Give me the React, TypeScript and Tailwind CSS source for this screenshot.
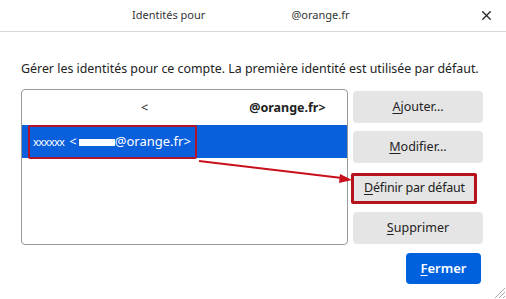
import { X } from "lucide-react"

function Btn({ k, rest, className = "" }: { k: string; rest: string; className?: string }) {
  return (
    <button className={`h-[32px] w-[130px] rounded-[4px] bg-[#e5e5e5] text-[12.5px] text-[#222] ${className}`}>
      <span className="underline underline-offset-2">{k}</span>
      {rest}
    </button>
  )
}

export default function App() {
  return (
    <div
      className="relative h-[299px] w-[506px] overflow-hidden bg-white text-[#222]"
      style={{ fontFamily: '"Noto Sans", "Open Sans", sans-serif' }}
    >
      {/* Title bar */}
      <div className="flex h-[32px] items-center border-b border-[#d9d9d9] pl-[132px] pr-[12px] text-[11px] text-[#333]">
        <span>Identités pour</span>
        <span className="ml-[86px]">@orange.fr</span>
        <X className="ml-auto h-[15px] w-[15px] text-[#222]" strokeWidth={2} />
      </div>

      {/* Body */}
      <div className="px-[21px] pt-[29px]">
        <p className="text-[12.4px] leading-[16px] text-[#222]">
          Gérer les identités pour ce compte. La première identité est utilisée par défaut.
        </p>

        <div className="mt-[12px] flex gap-[5px]">
          {/* List */}
          <div className="h-[156px] w-[327px] rounded-[4px] border border-[#999] pt-[2px]">
            <div className="flex h-[33px] items-center text-[12.5px]">
              <span className="ml-[119px]">&lt;</span>
              <span className="ml-[101px] font-bold">@orange.fr&gt;</span>
            </div>
            <div className="flex h-[33px] items-center bg-[#0a60dc] text-[13px] text-white">
              <span className="ml-[6px] flex h-[34px] items-center rounded-[2px] border-2 border-[#b3122a] pl-[3px] pr-[4px] pt-[1px]">
                <span className="text-[11px] tracking-[-0.6px]">xxxxxx</span>
                <span className="ml-[5px]">&lt;</span>
                <span className="ml-[2px] h-[7px] w-[36px] bg-white" />
                <span>@orange.fr&gt;</span>
              </span>
            </div>
          </div>

          {/* Buttons */}
          <div className="flex flex-col gap-[8px] pt-[2px]">
            <Btn k="A" rest="jouter…" />
            <Btn k="M" rest="odifier…" />
            <button className="-ml-[2px] mt-[2px] h-[31px] w-[126px] whitespace-nowrap rounded-[2px] border-[3px] border-[#b5121b] bg-[#e5e5e5] pl-[10px] text-left text-[12.5px] tracking-[-0.2px] text-[#222]">
              <span className="underline underline-offset-2">D</span>éfinir par défaut
            </button>
            <Btn k="S" rest="upprimer" />
          </div>
        </div>

        <div className="mt-[8px] flex justify-end pr-[4px]">
          <button className="h-[31px] w-[75px] rounded-[4px] bg-[#0061df] text-[13px] font-semibold text-white">
            <span className="underline underline-offset-2">F</span>ermer
          </button>
        </div>
      </div>

      {/* Red arrow annotation */}
      <svg className="pointer-events-none absolute left-0 top-0" width="506" height="299">
        <line x1="199" y1="161" x2="342" y2="178" stroke="#c8101c" strokeWidth="2" />
        <polygon points="352,180 340,174 339,183" fill="#c8101c" />
      </svg>

      {/* Resize grip */}
      <svg className="absolute bottom-0 right-0" width="16" height="16">
        <line x1="15" y1="5" x2="5" y2="15" stroke="#aaa" strokeWidth="1" />
        <line x1="15" y1="9" x2="9" y2="15" stroke="#aaa" strokeWidth="1" />
        <line x1="15" y1="13" x2="13" y2="15" stroke="#aaa" strokeWidth="1" />
      </svg>
    </div>
  )
}
